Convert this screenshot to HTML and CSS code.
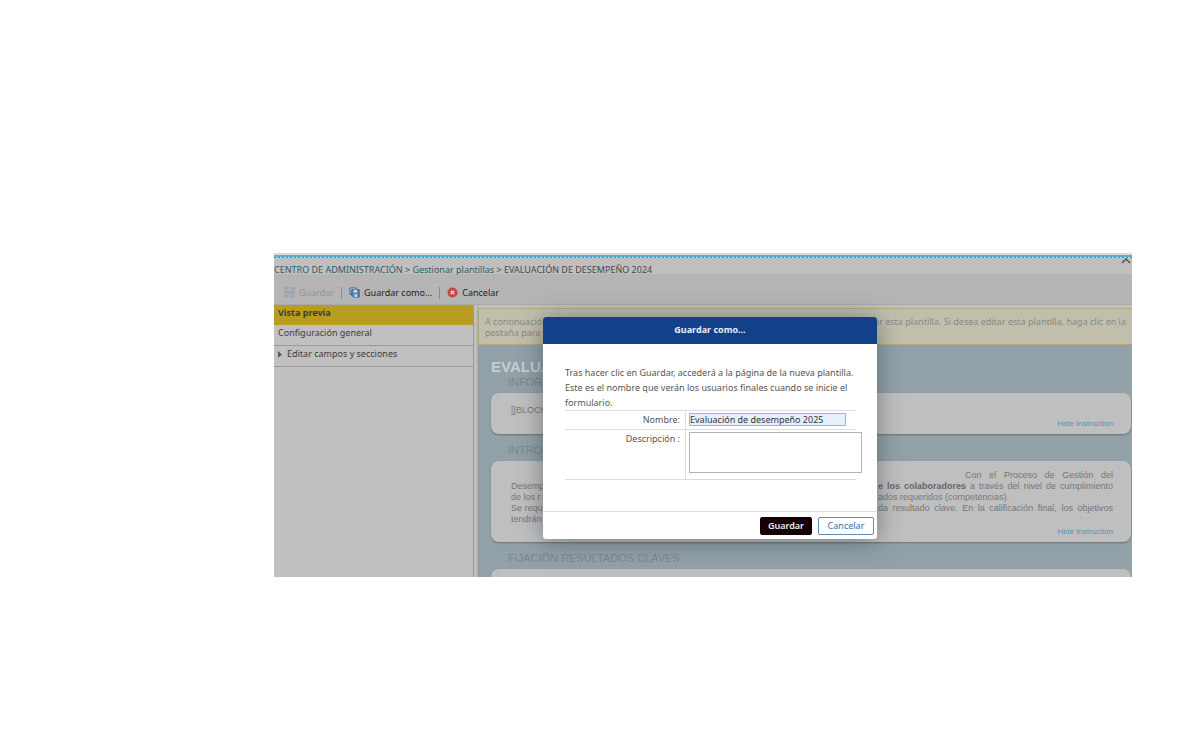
FILE: index.html
```
<!DOCTYPE html>
<html lang="es">
<head>
<meta charset="utf-8">
<title>Gestionar plantillas</title>
<link rel="stylesheet" href="styles.css">
</head>
<body>
<div class="app">
  <header class="top">
    <nav class="crumbs"><a href="#">CENTRO DE ADMINISTRACIÓN</a> &gt; <a href="#">Gestionar plantillas</a> &gt; <span>EVALUACIÓN DE DESEMPEÑO 2024</span></nav>
    <svg class="chevron" viewBox="0 0 10 6"><path d="M1 5 5 1l4 4" fill="none" stroke="#555" stroke-width="1.5"/></svg>
  </header>
  <div class="toolbar">
    <button class="tool off" disabled><svg viewBox="0 0 12 12"><path d="M1 1h10v10H1zM3 1v4h6V1M1 6h10M3 11V8h6v3" fill="none" stroke="#8fa0ac"/></svg>Guardar</button>
    <button class="tool"><svg viewBox="0 0 12 12"><path d="M1 1h7v7H1z" fill="#b9cad9" stroke="#3c6790"/><path d="M3 3h8v8H5L3 9z" fill="#5788b5" stroke="#285786"/><path d="M5 3h4v3H5zM6 8h3v3H6z" fill="#d0dae2"/></svg>Guardar como...</button>
    <button class="tool"><svg viewBox="0 0 12 12"><circle cx="6" cy="6" r="5.5" fill="#c5453b"/><path d="m4 4 4 4M8 4 4 8" stroke="#e5d5d3" stroke-width="1.6"/></svg>Cancelar</button>
  </div>
  <div class="body">
    <aside class="side">
      <a class="item active" href="#">Vista previa</a>
      <a class="item" href="#">Configuración general</a>
      <a class="item" href="#"><svg class="tri" viewBox="0 0 5 8"><path d="M0 0l5 4-5 4z" fill="#555"/></svg>Editar campos y secciones</a>
    </aside>
    <main class="main">
      <div class="notice">
        <div class="split"><span>A continuación</span><span>or esta plantilla. Si desea editar esta plantilla, haga clic en la</span></div>
        <div>pestaña para</div>
      </div>
      <div class="form">
        <h1>EVALUA</h1>
        <h2>INFOR</h2>
        <section class="card short">
          <p>[[BLOCK</p>
          <a class="hide" href="#">Hide Instruction</a>
        </section>
        <h2 class="gap">INTRO</h2>
        <section class="card tall">
          <div class="split"><span></span><span class="just intro">Con el Proceso de Gestión del</span></div>
          <div class="split"><span>Desemp</span><span class="just wide"><b>e los colaboradores</b> a través del nivel de cumplimiento</span></div>
          <div class="split"><span>de los r</span><span class="just wide start">ados requeridos (competencias).</span></div>
          <div class="split"><span>Se requ</span><span class="just wide">da resultado clave. En la calificación final, los objetivos</span></div>
          <div>tendrán</div>
          <a class="hide" href="#">Hide Instruction</a>
        </section>
        <h2 class="gap">FIJACIÓN RESULTADOS CLAVES</h2>
        <section class="card last"></section>
      </div>
    </main>
  </div>
  <div class="dialog" role="dialog" aria-labelledby="dlg">
    <h3 id="dlg">Guardar como...</h3>
    <div class="content">
      <p>Tras hacer clic en Guardar, accederá a la página de la nueva plantilla. Este es el nombre que verán los usuarios finales cuando se inicie el formulario.</p>
      <div class="field"><label for="n">Nombre:</label><div class="cell"><input id="n" value="Evaluación de desempeño 2025"></div></div>
      <div class="field desc"><label for="d">Descripción :</label><div class="cell"><textarea id="d"></textarea></div></div>
    </div>
    <footer><button class="btn primary">Guardar</button><button class="btn">Cancelar</button></footer>
  </div>
</div>
</body>
</html>
```
FILE: styles.css
```
* { box-sizing: border-box; }
body { margin: 0; padding: 253px 68px 0 274px; background: #fff; font: 9px/12px "Noto Sans", sans-serif; color: #444; }
a { color: inherit; text-decoration: none; }
button { font: inherit; color: inherit; }
h1, h2, h3, p { margin: 0; }
.app { position: relative; background: #c0c0c0; }
.top { display: flex; justify-content: space-between; border-top: 2px solid #dcdcdc; background: #bfbfbf; height: 21px; }
.top::before { content: ""; position: absolute; left: 0; right: 0; top: 2px; height: 3px; background: repeating-linear-gradient(90deg, #6c8290 0 2px, #c8d2d6 2px 4px) 0 2px / 100% 1px no-repeat, #4db5dc; }
.crumbs { padding-top: 9px; color: #484848; white-space: nowrap; }
.crumbs a { color: #2d5c70; }
.chevron { width: 10px; height: 6px; margin: 3px 1px 0 0; }
.toolbar { display: flex; align-items: center; height: 31px; padding: 7px 0 0 10px; background: #b5b5b5; border-bottom: 1px solid #a9a9a9; }
.tool { display: flex; align-items: center; gap: 4px; border: 0; background: none; padding: 0; color: #222; }
.tool + .tool { border-left: 1px solid #8c8c8c; margin-left: 7px; padding-left: 7px; }
.tool svg { width: 11px; height: 11px; }
.tool.off { color: #969696; }
.body { display: flex; height: 272px; overflow: hidden; }
.side { flex: 0 0 200px; border-right: 1px solid #999; }
.item { display: flex; align-items: center; gap: 5px; height: 21px; padding: 0 4px 4px; border-bottom: 1px solid #999; color: #3c3c3c; }
.item.active { height: 20px; background: #b99d20; border: 0; font-weight: bold; }
.tri { width: 4px; height: 7px; }
.main { flex: 1; min-width: 0; margin-left: 3px; padding-top: 3px; border-left: 1px solid #aaa; }
.notice { height: 37px; padding: 7px 6px 0 6px; border: 1px solid #b3a978; border-right: 0; background: #c1bfac; color: #888; line-height: 11px; }
.split { display: flex; justify-content: space-between; white-space: nowrap; }
.form { height: 232px; padding: 14px 1px 0 13px; background: #92a1a8; font-family: "Liberation Sans", sans-serif; }
h1 { font-size: 15px; line-height: 16px; color: #c8cdd0; }
h2 { padding-left: 17px; font-size: 11px; line-height: 15px; font-weight: normal; color: #7d878c; white-space: nowrap; }
.gap { margin-top: 9px; }
.card { display: flow-root; margin-top: 3px; padding: 0 18px 0 20px; border-radius: 8px; background: #bfbfbf; box-shadow: 0 1px 2px #667277; font-size: 9px; line-height: 11px; color: #777; }
.short { height: 41px; }
.short p { padding-top: 12px; }
.hide { display: block; text-align: right; font-size: 8px; color: #5595ac; }
.short .hide { margin-top: 2px; }
.tall { height: 81px; padding-top: 9px; }
.tall b { color: #666; }
.tall .hide { margin-top: 1px; }
.just { text-align-last: justify; white-space: normal; }
.intro { width: 148px; }
.wide { width: 235px; }
.start { text-align-last: left; }
.last { height: 30px; }
.dialog { position: absolute; left: 269px; top: 64px; width: 334px; height: 222px; display: flex; flex-direction: column; border-radius: 3px; background: #fff; box-shadow: 0 2px 24px rgba(40, 50, 60, .5); }
h3 { border-radius: 3px 3px 0 0; background: #124189; color: #e8eef7; font-size: 9px; line-height: 26px; padding-bottom: 1px; text-align: center; }
.content { flex: 1; padding: 21px 21px 0 22px; color: #555; }
.content p { line-height: 15px; }
.field { display: grid; grid-template-columns: 121px 1fr; border-top: 1px solid #ddd; height: 19px; }
.field label { padding: 3px 5px 0 0; text-align: right; border-right: 1px solid #ddd; }
.cell { padding: 2px 0 0 3px; }
.desc { height: 51px; border-bottom: 1px solid #ddd; }
input, textarea { display: block; border: 1px solid #b4b4b4; border-radius: 0; margin: 0; padding: 0; font: inherit; color: #333; }
input { width: 157px; height: 13px; border-color: #a5b3ca; background: #e7effd; }
textarea { width: 173px; height: 41px; resize: none; background: #fff; }
footer { display: flex; justify-content: flex-end; gap: 6px; height: 28px; padding: 5px 3px; border-top: 1px solid #ddd; }
.btn { width: 56px; height: 18px; padding: 0; border: 1px solid #5b8cbc; border-radius: 2px; background: #fff; color: #346fae; }
.primary { width: 52px; border-color: #160005; background: #160005; color: #eee; font-weight: 600; }
```
